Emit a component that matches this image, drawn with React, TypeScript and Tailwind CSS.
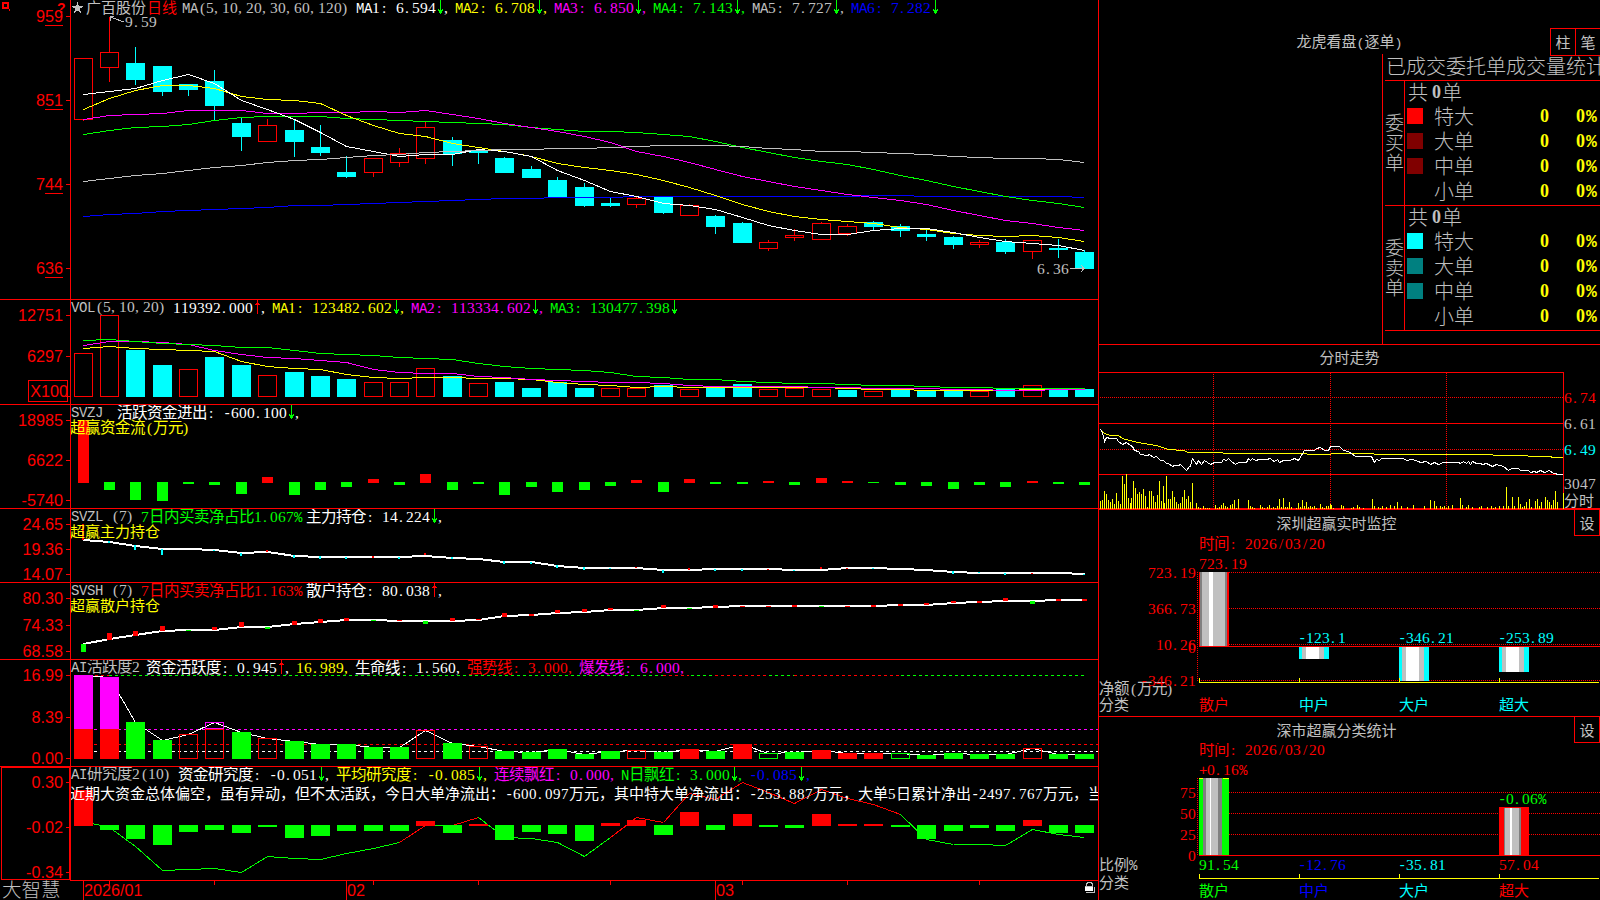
import { Fragment, type ReactNode } from 'react'
import clsx from 'clsx'

const RED = '#ff0000'
const CYAN = '#00ffff'
const GREEN = '#00ff00'
const YELLOW = '#ffff00'
const MAGENTA = '#ff00ff'
const BLUE = '#0000ff'
const GRAY = '#c0c0c0'
const WHITE = '#ffffff'

// Centre column of every trading day, shared by all indicator panels
const XS = [
  83, 109, 135, 162, 188, 214, 241, 267, 294, 320, 346, 373, 399, 425, 452, 478, 504, 531, 557, 584,
  610, 636, 663, 689, 715, 742, 768, 794, 821, 847, 873, 900, 926, 953, 979, 1005, 1032, 1058, 1084,
]

// [kind, high, top, bottom, low]
type Candle = [string, number, number, number, number]
const CANDLES: Candle[] = [
  ['r', 58, 58, 119, 121], ['r', 17, 52, 67, 82], ['c', 47, 63, 80, 85], ['c', 66, 66, 92, 96],
  ['c', 84, 84, 90, 96], ['c', 70, 81, 106, 120], ['c', 117, 123, 137, 151], ['r', 119, 125, 141, 142],
  ['c', 119, 130, 142, 157], ['c', 125, 147, 153, 156], ['c', 156, 172, 177, 178], ['r', 158, 158, 172, 177],
  ['r', 148, 153, 162, 167], ['r', 122, 127, 158, 164], ['c', 137, 140, 154, 166], ['c', 150, 151, 153, 164],
  ['c', 157, 158, 173, 173], ['c', 166, 169, 178, 178], ['c', 177, 180, 197, 197], ['c', 183, 187, 206, 207],
  ['c', 198, 203, 206, 207], ['r', 197, 198, 204, 208], ['c', 197, 197, 213, 214], ['r', 204, 205, 215, 216],
  ['c', 215, 216, 227, 234], ['c', 222, 223, 243, 243], ['r', 240, 242, 248, 251], ['r', 229, 235, 237, 241],
  ['r', 222, 223, 239, 240], ['r', 224, 226, 233, 236], ['c', 221, 222, 227, 230], ['c', 224, 226, 231, 237],
  ['c', 230, 234, 237, 241], ['c', 236, 237, 245, 249], ['r', 240, 242, 244, 248], ['c', 239, 242, 252, 254],
  ['r', 240, 240, 251, 259], ['c', 239, 248, 250, 258], ['c', 250, 252, 269, 269],
]

// Line and bar series are stored in thirds of a pixel from the panel's base
const MA_LINES: [string, number[]][] = [
  [BLUE, [650, 643, 639, 633, 631, 628, 626, 622, 617, 616, 613, 610, 607, 604, 601, 599, 596, 595, 593, 592, 591, 590, 590, 590, 589, 589, 588, 588, 588, 588, 587, 587, 588, 589, 589, 589, 589, 590, 592]],
  [GREEN, [403, 390, 382, 379, 373, 361, 352, 349, 349, 349, 355, 358, 361, 364, 366, 370, 374, 382, 389, 394, 395, 398, 403, 410, 423, 441, 457, 472, 483, 494, 508, 525, 541, 558, 573, 590, 600, 611, 622]],
  [MAGENTA, [358, 346, 343, 340, 331, 331, 331, 339, 340, 337, 337, 334, 337, 331, 343, 356, 371, 382, 395, 408, 428, 453, 470, 488, 508, 528, 544, 558, 571, 583, 592, 601, 614, 631, 646, 661, 670, 681, 691]],
  [YELLOW, [328, 295, 271, 257, 256, 266, 290, 297, 301, 310, 347, 376, 399, 410, 430, 442, 454, 469, 489, 502, 511, 523, 541, 561, 586, 613, 634, 649, 658, 663, 669, 683, 688, 701, 707, 710, 707, 713, 724]],
  [WHITE, [283, 274, 265, 242, 223, 250, 300, 329, 358, 398, 438, 455, 469, 463, 463, 448, 453, 470, 512, 541, 574, 588, 609, 616, 628, 652, 676, 692, 703, 703, 690, 685, 686, 697, 712, 724, 730, 737, 751]],
  [GRAY, [544, 535, 526, 520, 511, 503, 496, 487, 482, 478, 472, 466, 463, 457, 454, 452, 449, 448, 446, 444, 442, 438, 436, 436, 436, 440, 445, 449, 453, 455, 458, 460, 464, 469, 472, 475, 475, 479, 487]],
]

const VOL = 'r190 r76 c180 c225 r238 c201 c225 r256 c246 c258 c267 r277 r277 r235 c258 r280 c276 c294 c276 c294 r295 r295 c285 r296 c291 c282 r298 r295 r298 c300 r304 c298 c303 c303 r304 c297 r286 c299 c297'
const VOL_LINES: [string, number[]][] = [
  [YELLOW, [175, 170, 175, 178, 182, 184, 213, 228, 234, 239, 252, 261, 265, 262, 263, 265, 265, 268, 276, 283, 286, 291, 290, 291, 292, 291, 291, 292, 293, 295, 298, 298, 300, 301, 301, 301, 299, 298, 298]],
  [MAGENTA, [165, 155, 154, 158, 163, 181, 193, 201, 206, 211, 217, 237, 246, 250, 250, 259, 263, 267, 270, 274, 276, 277, 280, 286, 289, 289, 289, 290, 292, 293, 295, 295, 296, 298, 298, 300, 300, 298, 298]],
  [GREEN, [151, 149, 154, 159, 163, 166, 171, 173, 181, 189, 193, 196, 202, 205, 209, 219, 230, 234, 238, 241, 246, 258, 262, 267, 268, 273, 277, 280, 280, 283, 286, 286, 289, 292, 292, 295, 295, 295, 295]],
]

const FLOW = 'r390 g600 g630 g633 g582 g585 g612 r561 g615 g600 g591 r567 g585 r552 g600 g582 g615 g591 g606 g600 g588 r570 g606 r567 g582 g582 r573 g585 r564 r573 g579 g585 g588 g597 g585 g591 r573 g582 g585'

const MAIN_HOLD = [749, 755, 767, 777, 778, 780, 789, 785, 797, 800, 801, 801, 801, 797, 803, 806, 815, 817, 827, 833, 834, 834, 840, 839, 836, 836, 836, 839, 839, 833, 833, 836, 840, 845, 848, 849, 849, 849, 852]
const MAIN_MARKS: [number, string, number, number][] = [
  [0, RED, 702, 749], [1, CYAN, 753, 759], [2, CYAN, 765, 779], [3, CYAN, 777, 794], [5, CYAN, 780, 783],
  [6, CYAN, 789, 797], [7, RED, 780, 786], [8, CYAN, 796, 805], [9, CYAN, 798, 806], [10, CYAN, 801, 806],
  [11, RED, 798, 803], [12, CYAN, 801, 806], [13, RED, 789, 796], [14, CYAN, 802, 808], [16, CYAN, 814, 824],
  [17, CYAN, 816, 821], [18, CYAN, 825, 833], [19, CYAN, 831, 839], [20, CYAN, 833, 837], [21, RED, 830, 834],
  [22, CYAN, 840, 848], [23, RED, 833, 839], [24, CYAN, 837, 842], [25, CYAN, 837, 842], [26, RED, 836, 839],
  [27, CYAN, 839, 842], [28, RED, 831, 837], [29, RED, 833, 837], [30, CYAN, 833, 836], [33, CYAN, 843, 851],
  [34, CYAN, 846, 849], [35, CYAN, 849, 854], [36, RED, 849, 852], [38, CYAN, 851, 854],
]

const RETAIL_HOLD = [192, 178, 166, 152, 150, 149, 142, 142, 132, 127, 121, 121, 122, 123, 122, 119, 109, 106, 98, 95, 90, 90, 84, 84, 82, 79, 78, 78, 78, 78, 78, 76, 74, 68, 66, 63, 63, 61, 60]
const RETAIL_MARKS = 'g192-216 r159-180 r153-168 r138-153 g150-153 r141-150 r126-141 g141-147 r123-135 r117-129 r114-123 g120-123 r119-122 g123-132 r114-123 r117-120 r99-111 r102-108 r90-99 r87-96 r84-90 g90-93 r75-84 g84-87 r75-84 r78-81 r78-81 r75-81 g78-81 r78-81 r75-81 r72-78 r69-75 r63-69 r63-69 r54-63 g63-72 r57-63 r57-63'

// Upper case letters are filled bars, lower case are outlined
const ACTIVE = 'M285 M291 G426 G480 r463 m427 G456 r475 G483 G492 G492 G501 G501 r451 G489 r499 G513 G516 G507 G522 G513 r511 G516 R507 G513 R492 g519 G516 R510 R519 R519 g519 G525 G519 G522 G522 r505 G522 G522'

const STUDY = 'r630 g750 g777 g795 g756 g750 g759 g741 g774 g768 g753 g753 g753 r723 g759 r732 g780 g756 g762 g783 r729 r720 g765 r696 g750 r702 g741 g744 r702 r732 r732 g741 g777 g753 g744 g753 r720 g759 g759'
const STUDY_LINE = [725, 742, 798, 871, 868, 865, 877, 828, 834, 838, 820, 805, 787, 736, 737, 712, 771, 774, 788, 828, 772, 712, 727, 640, 658, 606, 636, 670, 627, 656, 672, 703, 778, 792, 793, 796, 748, 762, 772]

const INTRADAY = '27,282 32,282 36,292 43,318 50,306 62,309 80,310 86,320 98,328 110,322 120,330 128,333 134,345 144,350 152,358 172,362 178,358 190,368 198,364 212,376 220,376 230,386 236,384 246,394 252,390 264,392 272,388 290,406 298,394 302,394 308,370 318,387 324,376 334,388 344,376 360,387 372,382 394,382 400,372 408,376 416,370 424,380 436,387 444,382 468,382 476,371 482,376 488,371 496,376 508,372 530,372 540,371 546,376 554,378 562,372 568,381 580,376 598,376 606,372 612,370 624,376 634,362 644,347 672,347 678,341 690,336 702,347 716,347 722,335 748,335 760,346 776,348 796,363 844,364 852,382 858,372 868,376 874,370 940,370 950,376 966,374 984,378 990,382 1008,378 1020,388 1032,382 1044,388 1060,382 1104,382 1110,386 1120,380 1128,384 1134,378 1140,388 1146,378 1158,386 1170,384 1176,388 1190,384 1206,394 1218,388 1240,394 1256,405 1264,400 1284,400 1290,405 1314,407 1322,412 1334,408 1340,412 1352,406 1362,412 1378,406 1390,416 1396,414 1402,418 1418,418'
const INTRADAY_AVG = '32,282 44,296 60,300 84,302 98,310 130,318 160,325 200,332 236,343 280,347 296,352 398,353 400,355 578,356 720,358 724,355 850,356 854,358 1206,358 1210,361 1312,362 1316,364 1382,365 1386,367 1418,368'
const INTRADAY_VOL = '32:498 38:495 44:468 50:477 56:495 62:501 68:492 74:507 80:474 86:498 92:507 98:423 104:447 110:417 116:489 122:504 125:489 131:438 137:459 143:477 149:471 155:477 161:462 167:483 173:516 179:468 185:468 191:483 197:501 203:480 209:438 215:498 221:453 224:504 230:423 236:492 242:492 248:468 254:486 260:501 266:507 272:504 278:486 284:465 290:492 296:483 302:501 308:444 320:504 326:516 332:519 341:513 347:519 353:519 359:519 377:510 383:519 389:516 395:510 401:504 407:513 413:516 422:510 428:507 434:495 440:519 446:492 476:495 482:513 488:516 494:519 512:510 518:516 524:519 532:516 539:510 545:519 551:516 557:519 563:513 569:492 575:516 581:489 587:516 593:516 599:501 605:516 619:519 626:504 632:516 638:495 644:513 650:501 656:516 662:513 668:516 674:513 680:519 692:507 698:516 704:519 710:513 716:513 722:507 725:510 731:519 755:510 761:513 785:519 791:516 803:510 809:516 821:519 848:492 854:513 866:516 872:519 878:513 890:516 902:510 914:513 923:501 935:513 953:516 971:510 1004:513 1022:495 1034:498 1040:513 1052:513 1058:516 1064:513 1070:519 1076:513 1088:510 1112:489 1118:510 1130:516 1136:510 1146:516 1169:516 1175:513 1193:516 1205:513 1211:519 1217:516 1229:513 1241:513 1250:456 1256:513 1268:486 1274:513 1286:486 1292:507 1298:516 1304:513 1310:501 1319:492 1325:516 1337:498 1343:492 1349:513 1355:501 1367:486 1373:495 1379:501 1385:510 1391:495 1397:468 1403:501 1421:474'

const parseBars = (s: string) => s.split(' ').map(b => ({ kind: b[0], v: Number(b.slice(1)) }))

// Thin lines sit on pixel centres, 2px ones on pixel edges
const series = (values: number[], base: number, thick = false) =>
  values.map((v, i) => `${XS[i] + 0.5},${thick ? base + Math.round(v / 3) : base + Math.floor(v / 3) + 0.5}`).join(' ')

const scalePoints = (s: string) =>
  s.split(' ').map(p => {
    const [x, y] = p.split(',').map(Number)
    return `${Math.floor(1090 + x / 3) + 0.5},${Math.floor(335 + y / 3) + 0.5}`
  }).join(' ')

const isWide = (ch: string) => ch.charCodeAt(0) > 0x2e80

interface LabelProps {
  x: number
  y: number
  fill: string
  children: string
}

// Fixed pitch label: 8px for latin characters, 15px for chinese ones
function Label({ x, y, fill, children }: LabelProps) {
  const runs = children.match(/[A-Za-z%+-]+|[^A-Za-z%+-]+/g) ?? []
  let cursor = x
  return (
    <text y={y} fill={fill} className="font-['Liberation_Serif','Noto_Sans_CJK_SC',sans-serif] text-[15.5px] font-normal whitespace-pre">
      {runs.map((run, i) => {
        const xs = [...run].map(ch => {
          const at = cursor
          cursor += isWide(ch) ? 15 : 8
          if (ch === ':' || ch === '(' || ch === '/') return at + 2
          if (ch === '.') return at + 1
          return at
        })
        return (
          <tspan
            key={i}
            x={xs.join(' ')}
            className={clsx(/[A-Za-z%+-]/.test(run) && "font-['Liberation_Mono',monospace] text-[14px]", isWide(run[run.length - 1]) && 'text-[15px]')}
          >
            {run}
          </tspan>
        )
      })}
    </text>
  )
}

function Arrow({ x, y, up = false }: { x: number; y: number; up?: boolean }) {
  return up ? (
    <path d={`M${x + 0.5} ${y}v14M${x - 1} ${y + 3.5}h3M${x - 2} ${y + 4.5}h5`} stroke={RED} />
  ) : (
    <path d={`M${x + 0.5} ${y}v14M${x - 2} ${y + 9.5}h1M${x + 2} ${y + 9.5}h1M${x - 2} ${y + 10.5}h5M${x - 1} ${y + 11.5}h3M${x - 1} ${y + 12.5}h3`} stroke={GREEN} />
  )
}

function AxisText({ x = 63, y, anchor = 'end', children }: { x?: number; y: number; anchor?: 'start' | 'end'; children: string }) {
  return (
    <text x={x} y={y} fill={RED} textAnchor={anchor} className="font-['Liberation_Sans',sans-serif] text-[16.2px]">
      {children}
    </text>
  )
}

interface PanelProps {
  top: number
  height: number
  ticks?: [number, string][]
  children: ReactNode
}

function Panel({ top, height, ticks = [], children }: PanelProps) {
  return (
    <svg
      width={1098}
      height={height}
      viewBox={`0 ${top} 1098 ${height}`}
      shapeRendering="crispEdges"
      fill="none"
      className="block shrink-0"
    >
      {children}
      {top > 0 && <path d={`M0 ${top + 0.5}H1098`} stroke={RED} />}
      <path d={`M70.5 ${top}v${height}`} stroke={RED} />
      {ticks.map(([y, label]) => (
        <Fragment key={y}>
          <path d={`M66 ${y + 0.5}h4`} stroke={RED} />
          {label && <AxisText y={y + 6}>{label}</AxisText>}
        </Fragment>
      ))}
    </svg>
  )
}

function Bar({ x, top, bottom, color, filled, half = 9 }: { x: number; top: number; bottom: number; color: string; filled: boolean; half?: number }) {
  const t = Math.round(top)
  const b = Math.round(bottom)
  if (filled) return <rect x={x - half} y={t} width={half * 2 + 1} height={Math.max(1, b - t)} fill={color} />
  return <rect x={x - half + 0.5} y={t + 0.5} width={half * 2} height={Math.max(1, b - t - 1)} stroke={color} />
}

function PricePanel() {
  const legend: [string, string, number, string][] = [
    ['MA1: 6.594', WHITE, 356, ','], ['MA2: 6.708', YELLOW, 455, ','], ['MA3: 6.850', MAGENTA, 554, ','],
    ['MA4: 7.143', GREEN, 653, ','], ['MA5: 7.727', GRAY, 752, ','], ['MA6: 7.282', BLUE, 851, ''],
  ]
  return (
    <Panel top={0} height={299} ticks={[[16, '959'], [100, '851'], [184, '744'], [268, '636']]}>
      <path d="M45 25.5h18M45 109.5h18M45 193.5h18M45 277.5h18" stroke={RED} />
      <path d="M3 3h5v5h-5zM9 9.5h1" stroke={RED} strokeWidth={2} />
      <text x={57} y={13} fill={RED} className="font-['Liberation_Sans',sans-serif] text-[14px] font-bold">?</text>
      {CANDLES.map(([kind, high, top, bottom, low], i) => {
        const x = XS[i]
        const color = kind === 'r' ? RED : CYAN
        return (
          <g key={i}>
            <path d={`M${x + 0.5} ${high}V${top}M${x + 0.5} ${bottom}V${low}`} stroke={color} />
            <Bar x={x} top={top} bottom={kind === 'r' ? bottom + 1 : bottom} color={color} filled={kind === 'c'} />
          </g>
        )
      })}
      {MA_LINES.map(([color, values]) => (
        <polyline key={color} points={series(values, 0)} stroke={color} />
      ))}
      <path d="M110 17l14 5M110 16.5h4M110.500 16v5" stroke={GRAY} />
      <Label x={125} y={27} fill={GRAY}>9.59</Label>
      <Label x={1037} y={274} fill={GRAY}>6.36</Label>
      <path d="M1070 268.5h14M1081 265l3 3.5l-3 3.500" stroke={GRAY} />
      <path d="M77.500 2l1.500 4.200h4.500l-3.600 2.700l1.400 4.400l-3.800-2.700l-3.800 2.700l1.400-4.400l-3.600-2.700h4.500z" fill={GRAY} />
      <Label x={86} y={13} fill={GRAY}>广百股份</Label>
      <Label x={147} y={13} fill={RED}>日线</Label>
      <Label x={182} y={13} fill={GRAY}>MA(5,10,20,30,60,120)</Label>
      {legend.map(([text, color, x, comma]) => (
        <Fragment key={text}>
          <Label x={x} y={13} fill={color}>{text}</Label>
          <Arrow x={x + 84} y={0} />
          {comma && <Label x={x + 88} y={13} fill={color}>{comma}</Label>}
        </Fragment>
      ))}
    </Panel>
  )
}

function VolumePanel() {
  return (
    <Panel top={299} height={105} ticks={[[315, '12751'], [356, '6297'], [396, '']]}>
      {parseBars(VOL).map(({ kind, v }, i) => (
        <Bar key={i} x={XS[i]} top={290 + v / 3} bottom={397} color={kind === 'r' ? RED : CYAN} filled={kind === 'c'} />
      ))}
      {VOL_LINES.map(([color, values]) => (
        <polyline key={color} points={series(values, 290)} stroke={color} />
      ))}
      <rect x={28.5} y={380.5} width={39} height={21} stroke={RED} />
      <AxisText x={68} y={397}>X100</AxisText>
      <Label x={71} y={312} fill={GRAY}>VOL(5,10,20)</Label>
      <Label x={173} y={313} fill={WHITE}>119392.000</Label>
      <Arrow x={257} y={300} up />
      <Label x={261} y={313} fill={WHITE}>,</Label>
      <Label x={272} y={313} fill={YELLOW}>MA1: 123482.602</Label>
      <Arrow x={396} y={300} />
      <Label x={400} y={313} fill={YELLOW}>,</Label>
      <Label x={411} y={313} fill={MAGENTA}>MA2: 113334.602</Label>
      <Arrow x={535} y={300} />
      <Label x={539} y={313} fill={MAGENTA}>,</Label>
      <Label x={550} y={313} fill={GREEN}>MA3: 130477.398</Label>
      <Arrow x={674} y={300} />
    </Panel>
  )
}

function FlowPanel() {
  return (
    <Panel top={404} height={104} ticks={[[420, '18985'], [460, '6622'], [500, '-5740']]}>
      {parseBars(FLOW).map(({ kind, v }, i) =>
        kind === 'r' ? (
          <Bar key={i} x={XS[i]} top={290 + v / 3} bottom={483} color={RED} filled half={5} />
        ) : (
          <Bar key={i} x={XS[i]} top={482} bottom={290 + v / 3} color={GREEN} filled half={5} />
        )
      )}
      <Label x={71} y={417} fill={GRAY}>SVZJ</Label>
      <Label x={117} y={418} fill={WHITE}>活跃资金进出: -600.100</Label>
      <Arrow x={291} y={405} />
      <Label x={295} y={418} fill={WHITE}>,</Label>
      <Label x={70} y={433} fill={YELLOW}>超赢资金流(万元)</Label>
    </Panel>
  )
}

function MainHoldPanel() {
  return (
    <Panel top={508} height={74} ticks={[[524, '24.65'], [549, '19.36'], [574, '14.07']]}>
      <polyline points={series(MAIN_HOLD, 290, true)} stroke={WHITE} strokeWidth={2} />
      {MAIN_MARKS.map(([i, color, a, b]) => (
        <rect key={i} x={XS[i] - 1} y={290 + Math.round(a / 3)} width={2} height={Math.max(1, Math.round((b - a) / 3))} fill={color} />
      ))}
      <Label x={71} y={521} fill={GRAY}>SVZL (7)</Label>
      <Label x={141} y={522} fill={GREEN}>7日内买卖净占比1.067%</Label>
      <Label x={306} y={522} fill={WHITE}>主力持仓: 14.224</Label>
      <Arrow x={434} y={509} />
      <Label x={438} y={522} fill={WHITE}>,</Label>
      <Label x={70} y={537} fill={YELLOW}>超赢主力持仓</Label>
    </Panel>
  )
}

function RetailHoldPanel() {
  return (
    <Panel top={582} height={77} ticks={[[598, '80.30'], [625, '74.33'], [651, '68.58']]}>
      <polyline points={series(RETAIL_HOLD, 580, true)} stroke={WHITE} strokeWidth={2} />
      {RETAIL_MARKS.split(' ').map((m, i) => {
        const [a, b] = m.slice(1).split('-').map(Number)
        return <rect key={i} x={XS[i] - 2} y={580 + Math.round(a / 3)} width={5} height={Math.round((b - a) / 3)} fill={m[0] === 'r' ? RED : GREEN} />
      })}
      <Label x={71} y={595} fill={GRAY}>SVSH (7)</Label>
      <Label x={141} y={596} fill={RED}>7日内买卖净占比1.163%</Label>
      <Label x={306} y={596} fill={WHITE}>散户持仓: 80.038</Label>
      <Arrow x={434} y={583} up />
      <Label x={438} y={596} fill={WHITE}>,</Label>
      <Label x={70} y={611} fill={YELLOW}>超赢散户持仓</Label>
    </Panel>
  )
}

function ActivityPanel() {
  const bars = parseBars(ACTIVE)
  const line = bars.map(b => b.v)
  return (
    <Panel top={659} height={107} ticks={[[675, '16.99'], [717, '8.39'], [758, '0.00']]}>
      <g strokeDasharray="3 3">
        <path d="M109 675.5H1084" stroke={GREEN} />
        <path d="M94 729.5H1098" stroke={MAGENTA} />
        <path d="M94 744.5H1098" stroke={RED} />
        <path d="M94 751.5H1098" stroke={WHITE} />
      </g>
      <path d="M83 675.5H109M663 675.5H689M715 675.5H768M794 675.5H900" stroke="#000" />
      <path d="M83 675.5H109M663 675.5H689M715 675.5H768M794 675.5H900" stroke={RED} strokeDasharray="3 3" />
      <polyline points={series(line, 580)} stroke={WHITE} />
      {bars.map(({ kind, v }, i) => {
        const top = 580 + v / 3
        const filled = kind === kind.toUpperCase()
        if (kind.toLowerCase() === 'm') {
          return (
            <g key={i}>
              <Bar x={XS[i]} top={729} bottom={759} color={RED} filled={filled} />
              <Bar x={XS[i]} top={top} bottom={729} color={MAGENTA} filled={filled} />
            </g>
          )
        }
        return <Bar key={i} x={XS[i]} top={top} bottom={759} color={kind.toLowerCase() === 'r' ? RED : GREEN} filled={filled} />
      })}
      <Label x={71} y={672} fill={GRAY}>AI活跃度2</Label>
      <Label x={146} y={673} fill={WHITE}>资金活跃度: 0.945</Label>
      <Arrow x={281} y={660} up />
      <Label x={285} y={673} fill={WHITE}>,</Label>
      <Label x={296} y={673} fill={YELLOW}>16.989,</Label>
      <Label x={355} y={673} fill={WHITE}>生命线: 1.560,</Label>
      <Label x={467} y={673} fill={RED}>强势线: 3.000,</Label>
      <Label x={579} y={673} fill={MAGENTA}>爆发线: 6.000,</Label>
    </Panel>
  )
}

function StudyPanel() {
  return (
    <Panel top={766} height={114} ticks={[[782, '0.30'], [827, '-0.02'], [872, '-0.34']]}>
      {STUDY_LINE.slice(1).map((v, i) => {
        const rising = i === 12 || i === 14 || (i >= 20 && i < 31)
        return (
          <path
            key={i}
            d={`M${XS[i] + 0.5} ${580.5 + Math.floor(STUDY_LINE[i] / 3)}L${XS[i + 1] + 0.5} ${580.5 + Math.floor(v / 3)}`}
            stroke={rising ? RED : GREEN}
          />
        )
      })}
      {parseBars(STUDY).map(({ kind, v }, i) =>
        kind === 'r' ? (
          <Bar key={i} x={XS[i]} top={580 + v / 3} bottom={826} color={RED} filled />
        ) : (
          <Bar key={i} x={XS[i]} top={825} bottom={580 + v / 3} color={GREEN} filled />
        )
      )}
      {/* the day line turns red right after its low at the 20th bar */}
      <path d="M610.5 837.500L626 826" stroke={RED} />
      <rect x={1.5} y={767.5} width={68} height={112} stroke={RED} />
      <Label x={71} y={779} fill={GRAY}>AI研究度2(10)</Label>
      <Label x={178} y={780} fill={WHITE}>资金研究度: -0.051</Label>
      <Arrow x={321} y={767} />
      <Label x={325} y={780} fill={WHITE}>,</Label>
      <Label x={336} y={780} fill={YELLOW}>平均研究度: -0.085</Label>
      <Arrow x={479} y={767} />
      <Label x={483} y={780} fill={YELLOW}>,</Label>
      <Label x={494} y={780} fill={MAGENTA}>连续飘红: 0.000,</Label>
      <Label x={621} y={780} fill={GREEN}>N日飘红: 3.000</Label>
      <Arrow x={734} y={767} />
      <Label x={738} y={780} fill={GREEN}>,</Label>
      <Label x={749} y={780} fill={BLUE}>-0.085</Label>
      <Arrow x={801} y={767} />
      <Label x={806} y={780} fill={BLUE}>,</Label>
      <Label x={70} y={799} fill={WHITE}>近期大资金总体偏空，虽有异动，但不太活跃，今日大单净流出：-600.097万元，其中特大单净流出：-253.887万元，大单5日累计净出-2497.767万元，当</Label>
    </Panel>
  )
}

function TimeAxis() {
  return (
    <div className="flex h-5 items-start">
      <div className="w-[70px] shrink-0 pl-0.5 font-['Noto_Sans_CJK_SC',sans-serif] text-[19.5px] leading-[18px] font-light text-[#c0c0c0]">大智慧</div>
      <svg width={1028} height={20} viewBox="70 880 1028 20" shapeRendering="crispEdges" fill="none" className="block">
        <path d="M70 880.5H1098M83.5 880v20M346.5 880v20M715.5 880v20" stroke={RED} />
        <path d="M109.5 880v5M214.5 880v5M373.5 880v5M478.5 880v5M610.5 880v5M742.5 880v5M847.5 880v5M979.5 880v5" stroke={RED} />
        <AxisText x={84} y={896} anchor="start">2026/01</AxisText>
        <AxisText x={347} y={896} anchor="start">02</AxisText>
        <AxisText x={716} y={896} anchor="start">03</AxisText>
        <path d="M1086.500 886v-2.500h1v-1h4v1h1v2.500" stroke={GRAY} />
        <rect x={1085} y={887} width={8} height={4} fill={WHITE} />
        <path d="M1085 886.5h8M1094.500 887v6M1086 892.5h9" stroke={GRAY} />
      </svg>
    </div>
  )
}

function OrderGroup({ side, colors }: { side: string; colors: (string | null)[] }) {
  const names = ['特大', '大单', '中单', '小单']
  return (
    <div className="flex h-[125px] border-t border-[#ff0000]">
      <div className="flex w-[21px] flex-col items-center pt-[31px] text-[19px] leading-5">
        {[...side].map(ch => (
          <span key={ch}>{ch}</span>
        ))}
      </div>
      <div className="flex-1 border-l border-[#ff0000]">
        <div className="flex h-[22px] items-center pb-px pl-[3px] text-[20px] leading-5">
          共<span className="w-[14px] pl-1 font-['Liberation_Serif'] text-[18px] font-bold">0</span>单
        </div>
        {names.map((name, i) => (
          <div key={name} className="flex h-[25px] items-center pl-0.5 font-['Liberation_Serif'] text-[20px] leading-6 font-bold text-[#ffff00]">
            <div className={clsx('size-4', colors[i])} />
            <div className="w-[117px] pl-[11px] font-['Noto_Sans_CJK_SC'] font-light text-[#c0c0c0]">{name}</div>
            <div className="w-9 pt-px text-[18px]">0</div>
            <div className="flex w-6 items-baseline pt-px text-[18px]">0<span className="ml-px font-['Liberation_Mono'] text-[18px]">%</span></div>
          </div>
        ))}
      </div>
    </div>
  )
}

function OrderPanel() {
  return (
    <section className="flex h-[344px] flex-col pt-7">
      <div className="grid h-[26px] grid-cols-[1fr_auto_1fr] text-[15px]">
        <div />
        <h2 className="leading-[25px] font-normal">龙虎看盘<span className="font-['Liberation_Mono'] text-[13.3px]">(</span>逐单<span className="font-['Liberation_Mono'] text-[13.3px]">)</span></h2>
        <div className="flex justify-end font-normal">
          <button className="w-[25px] border border-r-0 border-[#ff0000] leading-[20px]">柱</button>
          <button className="w-[25px] border border-r-0 border-[#ff0000] leading-[20px]">笔</button>
        </div>
      </div>
      <div className="flex-1 self-end w-[218px] border-l border-[#ff0000] pl-0.5">
        <div className="h-[26px] overflow-hidden pl-px text-[20px] leading-[23px] whitespace-nowrap">已成交委托单成交量统计</div>
        <OrderGroup side="委买单" colors={['bg-[#ff0000]', 'bg-[#800000]', 'bg-[#800000]', null]} />
        <OrderGroup side="委卖单" colors={['bg-[#00ffff]', 'bg-[#008080]', 'bg-[#008080]', null]} />
        <div className="border-t border-[#ff0000]" />
      </div>
    </section>
  )
}

function IntradayPanel() {
  return (
    <section className="h-[165px] border-t border-[#ff0000]">
      <h2 className="h-[27px] text-center text-[15px] leading-[23px] font-normal">分时走势</h2>
      <svg width={501} height={137} viewBox="1099 372 501 137" shapeRendering="crispEdges" fill="none" className="block">
        <path d="M1099 372.500H1563.500V509M1099 423.500H1563M1099 474.500H1563M1099 508.500H1600" stroke={RED} />
        <path d="M1100 397.500H1563M1100 449.500H1563M1213.500 374V508M1330.500 373V508M1446.500 373V508" stroke={RED} strokeDasharray="1 1" />
        {INTRADAY_VOL.split(' ').map(b => {
          const [x, y] = b.split(':').map(Number)
          return <rect key={b} x={Math.floor(1090 + x / 3)} y={Math.round(335 + y / 3)} width={1} height={509 - Math.round(335 + y / 3)} fill={YELLOW} />
        })}
        <polyline points={scalePoints(INTRADAY_AVG)} stroke={YELLOW} />
        <polyline points={scalePoints(INTRADAY)} stroke={WHITE} />
        <Label x={1564} y={403} fill={RED}>6.74</Label>
        <Label x={1564} y={429} fill={GRAY}>6.61</Label>
        <Label x={1564} y={455} fill={CYAN}>6.49</Label>
        <Label x={1564} y={489} fill={GRAY}>3047</Label>
        <Label x={1564} y={506} fill={GRAY}>分时</Label>
      </svg>
    </section>
  )
}

// Vertical stripes [offset, width, color] give the bars their metal look
type Stripe = [number, number, string]

function Pillar({ x, top, bottom, color, stripes }: { x: number; top: number; bottom: number; color: string; stripes: Stripe[] }) {
  return (
    <g>
      <rect x={x} y={top} width={30} height={bottom - top} fill={color} />
      {stripes.map(([dx, w, fill]) => (
        <rect key={dx} x={x + dx} y={top} width={w} height={bottom - top} fill={fill} />
      ))}
    </g>
  )
}

const UP_STRIPES: Stripe[] = [[1, 2, '#808080'], [3, 7, GRAY], [10, 4, WHITE], [14, 12, GRAY], [26, 2, '#808080']]
const DOWN_STRIPES: Stripe[] = [[3, 4, GRAY], [7, 13, WHITE], [20, 5, GRAY]]

function PanelHeader({ title }: { title: string }) {
  return (
    <div className="flex h-[26px] text-[15px] font-normal">
      <h2 className="flex-1 text-center leading-[25px]">{title}</h2>
      <button className="w-[26px] border border-t-0 border-[#ff0000] leading-[21px]">设</button>
    </div>
  )
}

function MonitorPanel() {
  return (
    <section className="h-[207px] border-t border-[#ff0000]">
      <PanelHeader title="深圳超赢实时监控" />
      <svg width={501} height={180} viewBox="1099 536 501 180" shapeRendering="crispEdges" fill="none" className="block">
        <path d="M1229 572.500H1600M1229 608.500H1600M1229 644.500H1600M1199 680.500H1600M1197.500 572V681" stroke={RED} strokeDasharray="1 1" />
        <Label x={1199} y={549} fill={RED}>时间: 2026/03/20</Label>
        <Label x={1199} y={569} fill={RED}>723.19</Label>
        <Label x={1148} y={578} fill={RED}>723.19</Label>
        <Label x={1148} y={614} fill={RED}>366.73</Label>
        <Label x={1156} y={650} fill={RED}>10.26</Label>
        <Label x={1188} y={653} fill={RED}>0</Label>
        <Label x={1099} y={694} fill={GRAY}>净额(万元)</Label>
        <Label x={1140} y={686} fill={RED}>-346.21</Label>
        <Pillar x={1199} top={572} bottom={646} color={RED} stripes={UP_STRIPES} />
        <Pillar x={1299} top={647} bottom={659} color={CYAN} stripes={DOWN_STRIPES} />
        <Pillar x={1399} top={647} bottom={681} color={CYAN} stripes={DOWN_STRIPES} />
        <Pillar x={1499} top={647} bottom={672} color={CYAN} stripes={DOWN_STRIPES} />
        <path d="M1199 646.500H1600" stroke={RED} />
        <path d="M1199 682.500H1599M1199.500 678v4M1299.500 678v4M1399.500 678v4M1499.500 678v4" stroke={YELLOW} />
        <Label x={1298} y={643} fill={CYAN}>-123.1</Label>
        <Label x={1398} y={643} fill={CYAN}>-346.21</Label>
        <Label x={1498} y={643} fill={CYAN}>-253.89</Label>
        <Label x={1099} y={710} fill={GRAY}>分类</Label>
        <Label x={1199} y={710} fill={RED}>散户</Label>
        <Label x={1299} y={710} fill={CYAN}>中户</Label>
        <Label x={1399} y={710} fill={CYAN}>大户</Label>
        <Label x={1499} y={710} fill={CYAN}>超大</Label>
      </svg>
    </section>
  )
}

function CategoryPanel() {
  return (
    <section className="h-[184px] border-t border-[#ff0000]">
      <PanelHeader title="深市超赢分类统计" />
      <svg width={501} height={157} viewBox="1099 743 501 157" shapeRendering="crispEdges" fill="none" className="block">
        <path d="M1229 792.500H1600M1229 813.500H1600M1229 834.500H1600M1197.500 778V856" stroke={RED} strokeDasharray="1 1" />
        <Label x={1199} y={755} fill={RED}>时间: 2026/03/20</Label>
        <Label x={1199} y={775} fill={RED}>+0.16%</Label>
        <Label x={1180} y={798} fill={RED}>75</Label>
        <Label x={1180} y={819} fill={RED}>50</Label>
        <Label x={1180} y={840} fill={RED}>25</Label>
        <Label x={1188} y={861} fill={RED}>0</Label>
        <Pillar
          x={1199} top={778} bottom={855} color={GREEN}
          stripes={[[4, 3, '#808080'], [7, 4, GRAY], [11, 1, WHITE], [12, 7, GRAY], [19, 4, '#808080']]}
        />
        <path d="M1199 778.500h4M1223 778.500h6" stroke={YELLOW} />
        <Pillar
          x={1499} top={807} bottom={855} color={RED}
          stripes={[[5, 1, '#808080'], [6, 5, GRAY], [11, 2, WHITE], [13, 7, GRAY], [20, 2, '#808080']]}
        />
        <path d="M1199 855.500H1600M1499 807.500h30" stroke={RED} />
        <path d="M1199 878.500H1599M1199.500 874v4M1299.500 874v4M1399.500 874v4M1499.500 874v4" stroke={YELLOW} />
        <Label x={1498} y={804} fill={GREEN}>-0.06%</Label>
        <Label x={1199} y={870} fill={GREEN}>91.54</Label>
        <Label x={1298} y={870} fill={BLUE}>-12.76</Label>
        <Label x={1398} y={870} fill={CYAN}>-35.81</Label>
        <Label x={1499} y={870} fill={RED}>57.04</Label>
        <Label x={1099} y={870} fill={GRAY}>比例%</Label>
        <Label x={1099} y={888} fill={GRAY}>分类</Label>
        <Label x={1199} y={896} fill={GREEN}>散户</Label>
        <Label x={1299} y={896} fill={BLUE}>中户</Label>
        <Label x={1399} y={896} fill={CYAN}>大户</Label>
        <Label x={1499} y={896} fill={RED}>超大</Label>
      </svg>
    </section>
  )
}

export default function App() {
  return (
    <div className="flex h-[900px] w-[1600px] overflow-hidden bg-black">
      <main className="flex w-[1099px] shrink-0 flex-col border-r border-[#ff0000]">
        <PricePanel />
        <VolumePanel />
        <FlowPanel />
        <MainHoldPanel />
        <RetailHoldPanel />
        <ActivityPanel />
        <StudyPanel />
        <TimeAxis />
      </main>
      <aside className="flex w-[501px] flex-col overflow-hidden font-['Noto_Sans_CJK_SC',sans-serif] font-light text-[#c0c0c0]">
        <OrderPanel />
        <IntradayPanel />
        <MonitorPanel />
        <CategoryPanel />
      </aside>
    </div>
  )
}
